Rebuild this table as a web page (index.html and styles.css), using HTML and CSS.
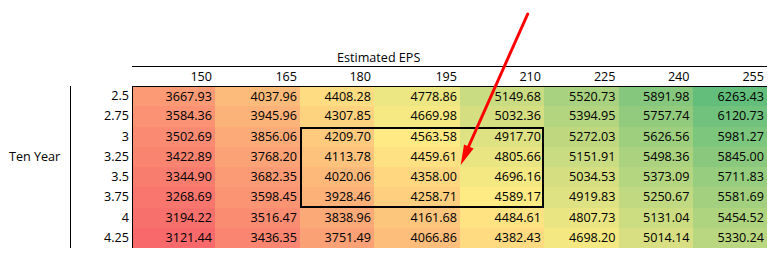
FILE: index.html
```html
<!DOCTYPE html>
<html lang="en">
<head>
<meta charset="utf-8">
<title>Estimated EPS sensitivity</title>
<link rel="stylesheet" href="styles.css">
</head>
<body>
<div class="page">
  <div class="sheet">
    <div class="blank"></div>
    <div class="title">Estimated EPS</div>

    <div class="blank"></div>
    <div class="h">150</div><div class="h">165</div><div class="h">180</div><div class="h">195</div>
    <div class="h">210</div><div class="h">225</div><div class="h">240</div><div class="h">255</div>

    <div class="side"></div><div class="lbl">2.5</div>
    <div class="v top first">3667.93</div><div class="v top">4037.96</div><div class="v top">4408.28</div><div class="v top">4778.86</div><div class="v top">5149.68</div><div class="v top">5520.73</div><div class="v top">5891.98</div><div class="v top">6263.43</div>

    <div class="side"></div><div class="lbl">2.75</div>
    <div class="v first">3584.36</div><div class="v">3945.96</div><div class="v">4307.85</div><div class="v">4669.98</div><div class="v">5032.36</div><div class="v">5394.95</div><div class="v">5757.74</div><div class="v">6120.73</div>

    <div class="side"></div><div class="lbl">3</div>
    <div class="v first">3502.69</div><div class="v">3856.06</div><div class="v box-tl">4209.70</div><div class="v box-t">4563.58</div><div class="v box-tr">4917.70</div><div class="v">5272.03</div><div class="v">5626.56</div><div class="v">5981.27</div>

    <div class="side">Ten Year</div><div class="lbl">3.25</div>
    <div class="v first">3422.89</div><div class="v">3768.20</div><div class="v box-l">4113.78</div><div class="v">4459.61</div><div class="v box-r">4805.66</div><div class="v">5151.91</div><div class="v">5498.36</div><div class="v">5845.00</div>

    <div class="side"></div><div class="lbl">3.5</div>
    <div class="v first">3344.90</div><div class="v">3682.35</div><div class="v box-l">4020.06</div><div class="v">4358.00</div><div class="v box-r">4696.16</div><div class="v">5034.53</div><div class="v">5373.09</div><div class="v">5711.83</div>

    <div class="side"></div><div class="lbl">3.75</div>
    <div class="v first">3268.69</div><div class="v">3598.45</div><div class="v box-bl">3928.46</div><div class="v box-b">4258.71</div><div class="v box-br">4589.17</div><div class="v">4919.83</div><div class="v">5250.67</div><div class="v">5581.69</div>

    <div class="side"></div><div class="lbl">4</div>
    <div class="v first">3194.22</div><div class="v">3516.47</div><div class="v">3838.96</div><div class="v">4161.68</div><div class="v">4484.61</div><div class="v">4807.73</div><div class="v">5131.04</div><div class="v">5454.52</div>

    <div class="side"></div><div class="lbl">4.25</div>
    <div class="v first">3121.44</div><div class="v">3436.35</div><div class="v">3751.49</div><div class="v">4066.86</div><div class="v">4382.43</div><div class="v">4698.20</div><div class="v">5014.14</div><div class="v">5330.24</div>
  </div>

  <svg class="arrow" width="780" height="273" viewBox="0 0 780 273" aria-hidden="true">
    <line x1="527.7" y1="14" x2="468.6" y2="146.5" stroke="#ff0000" stroke-width="3" stroke-linecap="round"/>
    <polygon points="460.7,165 473.6,148.6 464.0,144.4" fill="#ff0000"/>
  </svg>
</div>
<script src="script.js"></script>
</body>
</html>
```

FILE: styles.css
```css
html, body {
  margin: 0;
  padding: 0;
  background: #ffffff;
}

.page {
  position: relative;
  width: 780px;
  height: 273px;
  overflow: hidden;
  font-family: "Open Sans", "Liberation Sans", sans-serif;
  font-size: 12.6px;
  color: #000000;
}

.sheet {
  display: grid;
  grid-template-columns: 70px 62px 83px 85px 74px 86px 84px 74.5px 74px 74.5px;
  grid-template-rows: 20px 20px repeat(8, 20.25px);
  padding-top: 46px;
  line-height: 20px;
}

.sheet > div {
  box-sizing: border-box;
  white-space: nowrap;
}

.blank {
  grid-column: span 2;
}

.title {
  grid-column: span 8;
  padding-left: 205px;
  padding-top: 2px;
}

.h {
  text-align: right;
  padding-right: 3px;
  border-top: 1px solid #000;
}

.side {
  padding-left: 9px;
  line-height: 20.25px;
}

.lbl {
  text-align: right;
  padding-right: 3px;
  border-left: 1px solid #000;
  line-height: 20.25px;
}

.v {
  text-align: right;
  padding-right: 3px;
  line-height: 20.25px;
  background: #ffeb84;
}

.v.top {
  border-top: 1px solid #000;
  line-height: 19.25px;
}

.v.first {
  border-left: 1px solid #000;
}

.box-tl { box-shadow: inset 2px 2px 0 #000; }
.box-t  { box-shadow: inset 0 2px 0 #000; }
.box-tr { box-shadow: inset -2px 2px 0 #000; }
.box-l  { box-shadow: inset 2px 0 0 #000; }
.box-r  { box-shadow: inset -2px 0 0 #000; }
.box-bl { box-shadow: inset 2px -2px 0 #000; }
.box-b  { box-shadow: inset 0 -2px 0 #000; }
.box-br { box-shadow: inset -2px -2px 0 #000; }

.arrow {
  position: absolute;
  left: 0;
  top: 0;
  pointer-events: none;
}
```

FILE: script.js
```js
(function () {
  var cells = Array.prototype.slice.call(document.querySelectorAll('.v'));
  var vals = cells.map(function (c) { return parseFloat(c.textContent); });
  var sorted = vals.slice().sort(function (a, b) { return a - b; });
  var n = sorted.length;
  var min = sorted[0];
  var max = sorted[n - 1];
  var mid = n % 2 ? sorted[(n - 1) / 2] : (sorted[n / 2 - 1] + sorted[n / 2]) / 2;
  var lo = [248, 105, 107], md = [255, 235, 132], hi = [99, 190, 123];
  cells.forEach(function (c, i) {
    var v = vals[i], a, b, t;
    if (v <= mid) { a = lo; b = md; t = (v - min) / (mid - min); }
    else { a = md; b = hi; t = (v - mid) / (max - mid); }
    var rgb = a.map(function (x, k) { return Math.round(x + (b[k] - x) * t); });
    c.style.backgroundColor = 'rgb(' + rgb.join(',') + ')';
  });
})();
```
